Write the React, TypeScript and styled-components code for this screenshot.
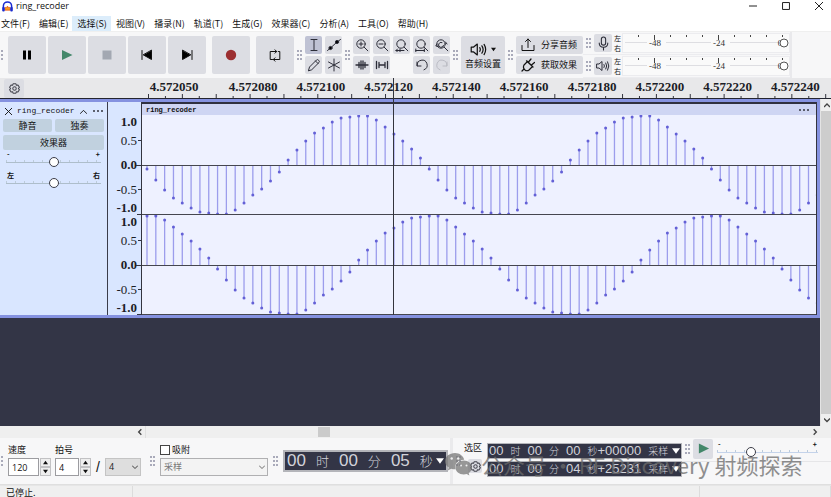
import React from 'react';
import styled, { createGlobalStyle, css } from 'styled-components';

const UI = '"Open Sans", "Noto Sans", "Noto Sans CJK SC", sans-serif';
const CJK = '"Noto Sans CJK SC", sans-serif';
const MONO = '"Liberation Mono", "Noto Sans CJK SC", monospace';
const NUM = '"Liberation Serif", serif';
const LCD = '"Liberation Sans", "Noto Sans CJK SC", sans-serif';

const GlobalStyle = createGlobalStyle`
  *, *::before, *::after { box-sizing: border-box; }
  body { margin: 0; background: #efefef; color: #111; font: 9px/12px ${UI}; }
  button, input, select { font: inherit; color: inherit; margin: 0; padding: 0; border: 0; border-radius: 0; }
  button { background: none; }
  svg { display: block; }
`;

/* ---------- shell ---------- */
const Window = styled.div`
  display: flex; flex-direction: column; height: 100vh; overflow: hidden; position: relative;
`;
const TitleBar = styled.header`
  display: flex; align-items: center; height: 16px; flex: none; padding: 0 8px 4px 2px; background: #fff; gap: 3px;
`;
const Title = styled.h1`
  margin: 0; flex: 1; font: 9px/12px ${UI};
`;
const WindowButtons = styled.div`
  display: flex; gap: 25px;
`;
const MenuBar = styled.nav`
  display: flex; flex: none; height: 15px; background: #fff; overflow: hidden;
`;
const MenuItem = styled.button<{ $on?: boolean }>`
  flex: none; padding: 0 4px 0 5px; font: 9px/15px ${CJK}; white-space: nowrap;
  background: ${p => (p.$on ? '#dcedfb' : 'transparent')};
  &:first-child { padding-left: 1px; }
`;

/* ---------- toolbar ---------- */
const ToolBar = styled.div`
  display: flex; flex: none; align-items: center; height: 47px; background: #f7f7f8; overflow: hidden;
  border-top: 1px solid #efefef;
`;
const GripBox = styled.span<{ $kind: 'edge' | 'wide' | 'plain' }>`
  flex: none; display: block; width: 5px;
  margin: ${p => ({ edge: '0 5px 0 -2px', wide: '0 5px', plain: '0 3px' })[p.$kind]};
`;
const Transport = styled.div`
  display: flex; flex: none; gap: 2px;
`;
const btn = css`
  display: flex; align-items: center; justify-content: center; background: #dcdde3; border-radius: 2px;
`;
const BigButton = styled.button<{ $apart?: boolean }>`
  ${btn} width: 38px; height: 38px; margin-left: ${p => (p.$apart ? '4px' : '0')};
`;
const ToolGrid = styled.div<{ $cols: number }>`
  display: grid; flex: none; gap: 2px 3px; grid-template-columns: repeat(${p => p.$cols}, 17px); grid-auto-rows: 18px;
`;
const ToolButton = styled.button<{ $on?: boolean; $col?: number; $dim?: boolean }>`
  ${btn} background: ${p => (p.$on ? '#bfc2d4' : '#dcdde3')};
  color: ${p => (p.$dim ? '#bbbcc4' : '#2c2d38')};
  ${p => p.$col && css`grid-column: ${p.$col};`}
`;
const AudioSetup = styled.button`
  ${btn} flex: none; flex-direction: column; width: 44px; height: 38px; font: 9px/12px ${CJK};
`;
const IconRow = styled.span`
  display: flex; align-items: center; gap: 4px;
`;
const ShareStack = styled.div`
  display: grid; flex: none; gap: 2px; width: 67px; grid-auto-rows: 18px;
`;
const ShareButton = styled.button`
  ${btn} justify-content: flex-start; padding-left: 5px; gap: 6px; font: 9px/12px ${CJK}; white-space: nowrap;
`;
const Meters = styled.div`
  display: flex; flex-direction: column; flex: 1; max-width: 209px; border-right: 2px solid #e9e9ec;
`;
const MeterRow = styled.div`
  display: flex; align-items: center; height: 23px; border-bottom: 1px solid #ececef;
`;
const MeterButton = styled.button`
  ${btn} flex: none; width: 18px; height: 18px; color: #2c2d38;
`;
const ChannelNames = styled.span`
  display: flex; flex: none; flex-direction: column; width: 10px; padding-left: 2px; font: 7px/10px ${CJK};
`;
const MeterScale = styled.div`
  flex: 1; height: 20px; border: 1px solid #ececef; background: #fafafa;
`;

/* ---------- workspace ---------- */
const Workspace = styled.main`
  display: flex; flex-direction: column; flex: 1; min-height: 0; position: relative; background: #333546;
`;
const Ruler = styled.div`
  display: flex; flex: none; height: 21px; background: #e8e8ea; border-bottom: 1px solid #24252f;
`;
const RulerCorner = styled.div`
  flex: none; width: 142px; padding: 1px 4px;
`;
const RulerButton = styled.button`
  ${btn} width: 20px; height: 19px; color: #44454f;
`;
const RulerScale = styled.div`
  flex: 1; min-width: 0; overflow: hidden;
`;
const Body = styled.div`
  display: flex; flex: 1; min-height: 0;
`;
const TrackArea = styled.div`
  flex: 1; min-width: 0;
`;
const Track = styled.section`
  display: flex; border: 3px solid #8592e0; border-left: 0; background: #d9e6ff;
`;
const Panel = styled.div`
  flex: none; width: 108px; padding: 3px 3px 0; border-right: 1px solid #3a3c4a;
`;
const PanelHead = styled.div`
  display: flex; align-items: center; height: 12px; margin-bottom: 2px; padding: 0 1px 0 2px; gap: 5px;
`;
const TrackName = styled.span`
  flex: 1; font: 8px/12px ${MONO};
`;
const PlainButton = styled.button`
  display: flex; flex: none;
`;
const PanelButtons = styled.div`
  display: grid; grid-template-columns: 1fr 1fr; gap: 3px;
`;
const PanelButton = styled.button<{ $wide?: boolean }>`
  background: #c1d1df; border-radius: 2px; font: 9px/13px ${CJK}; height: 13px;
  ${p => p.$wide && css`grid-column: 1 / -1; height: 15px; line-height: 14px;`}
`;
const SliderBlock = styled.label<{ $tight?: boolean }>`
  display: block; padding: 0 3px; margin-top: ${p => (p.$tight ? '5px' : '1px')};
`;
const SliderEnds = styled.span`
  display: flex; justify-content: space-between; padding: 0 1px; height: 5px; font: bold 7px/7px ${CJK};
`;
const Range = styled.input<{ $blue?: boolean }>`
  appearance: none; display: block; width: 100%; height: 11px; background:
    linear-gradient(${p => (p.$blue ? '#c4d3ea' : '#aebecb')}, ${p => (p.$blue ? '#c4d3ea' : '#aebecb')}) 0 6px / 100% 1px no-repeat,
    repeating-linear-gradient(90deg, #bccbda 0 1px, transparent 1px 9px) 0 4px / 100% 2px no-repeat;
  &::-webkit-slider-thumb {
    appearance: none; width: 10px; height: 10px; border-radius: 50%; border: 1px solid #3c3d48; background: #fff;
  }
`;
const Axis = styled.div`
  flex: none; width: 34px; padding-top: 13px; border-right: 1px solid #33343f;
`;
const Clip = styled.div`
  flex: 1; min-width: 0; border-right: 1px solid #33343f; background: #eef1ff;
`;
const ClipHead = styled.div`
  display: flex; align-items: center; justify-content: space-between; height: 13px; padding: 0 6px 0 4px;
  border-top: 2px solid #2f3040; background: #ced5f3; font: bold 7px/10px ${MONO};
`;
const Playhead = styled.div`
  position: absolute; left: 393px; top: 0; height: 237px; width: 1px; background: #33343c;
`;
const VScroll = styled.div`
  display: flex; flex: none; flex-direction: column; width: 11px; background: #efefef; border-left: 1px solid #e4e4e4;
`;
const VThumb = styled.div`
  flex: 1; background: #cdcdcd;
`;
const ScrollArrow = styled.button`
  display: flex; flex: none; align-items: center; justify-content: center; width: 11px; height: 12px; color: #444;
`;
const HScroll = styled.div`
  display: flex; flex: none; height: 12px; background: #efefef; padding: 0 11px 0 134px;
`;
const HTrack = styled.div`
  flex: 1; padding: 1px 0 1px 25%; border-left: 1px solid #e0e0e0;
`;
const HThumb = styled.div`
  width: 12px; height: 10px; background: #cbcbcb;
`;

/* ---------- bottom bar ---------- */
const BottomBar = styled.div`
  display: flex; flex: none; height: 47px; position: relative; background: #f7f7f8; border-bottom: 1px solid #dfdfdf;
`;
const Center = styled.div`
  display: flex; align-items: center; flex: none;
`;
const Field = styled.div<{ $gap?: number }>`
  display: flex; flex: none; flex-direction: column; padding-top: 6px; margin-right: ${p => p.$gap || 0}px;
`;
const FieldLabel = styled.label`
  display: flex; align-items: center; height: 12px; margin-bottom: 2px; gap: 2px; font: 9px/12px ${CJK};
`;
const FieldRow = styled.div`
  display: flex; align-items: center; height: 18px;
`;
const NumberInput = styled.input<{ $w: number }>`
  width: ${p => p.$w}px; height: 18px; padding: 0 3px; border: 1px solid #9c9ca0; background: #fff; font: 9px/16px ${UI};
`;
const Spinner = styled.span`
  display: grid; width: 11px; height: 18px; grid-auto-rows: 9px; margin-left: 1px;
`;
const SpinButton = styled.button`
  display: flex; align-items: center; justify-content: center; background: #eee; border: 1px solid #c2c2c4;
`;
const Slash = styled.span`
  width: 14px; text-align: center; font: 14px/18px ${LCD};
`;
const SelectBox = styled.span<{ $w: number }>`
  position: relative; display: block; width: ${p => p.$w}px; height: 18px;
  svg { position: absolute; right: 3px; top: 6px; pointer-events: none; }
`;
const Select = styled.select<{ $off?: boolean }>`
  appearance: none; width: 100%; height: 18px; padding: 0 3px; border: 1px solid ${p => (p.$off ? '#b0b0b2' : '#c4c4c4')};
  background: ${p => (p.$off ? '#f3f3f3' : '#dedede')}; color: ${p => (p.$off ? '#777' : '#222')};
  font: ${p => (p.$off ? `9px/16px ${CJK}` : `9px/16px ${UI}`)}; opacity: 1;
`;
const Check = styled.input`
  appearance: none; width: 10px; height: 10px; border: 1px solid #444; background: #fff;
`;
const TimeBox = styled.div<{ $big?: boolean }>`
  display: flex; align-items: center; justify-content: space-between; flex: none;
  background: #333546; color: #d2d3da; white-space: nowrap;
  ${p => p.$big
    ? css`height: 22px; width: 165px; padding: 0 2px; border: 2px solid #b4b5ba; font: 17px/18px ${LCD};`
    : css`height: 16px; width: 195px; padding: 0 1px; border: 1px solid #b4b5ba; font: 13px/14px ${LCD};`}
`;
const TimeFields = styled.span<{ $big?: boolean }>`
  display: flex; align-items: center; gap: ${p => (p.$big ? '10px' : '7px')};
`;
const TimeField = styled.span`
  display: flex; align-items: center;
`;
const Unit = styled.span<{ $big?: boolean }>`
  font: ${p => (p.$big ? '300 13px/18px' : '300 10px/14px')} ${CJK};
`;
const Caret = styled.button`
  display: flex; color: #fff;
`;
const Divider = styled.span`
  flex: none; width: 3px; margin-left: 2px; background: #eaeaec;
`;
const SelectionCol = styled.div`
  display: flex; flex: none; flex-direction: column; align-items: flex-end; width: 18px; gap: 4px; padding-top: 3px; font: 9px/14px ${CJK};
`;
const SmallGear = styled.button`
  ${btn} width: 14px; height: 14px; color: #44454f;
`;
const TimeStack = styled.div`
  display: flex; flex: none; flex-direction: column; gap: 2px; padding-top: 5px; margin-left: 5px;
`;
const SpeedBar = styled.div`
  display: flex; flex: 1; align-items: center; height: 24px; padding: 0 13px 2px 0; border-bottom: 1px solid #e6e6e8;
`;
const PlayButton = styled.button`
  ${btn} flex: none; width: 20px; height: 20px; margin-right: 1px;
`;
const SpeedSlider = styled.label`
  flex: 1; padding: 1px 0 0 3px; min-width: 0;
`;
const Watermark = styled.div`
  position: absolute; left: 445px; top: 10px; display: flex; align-items: center; gap: 9px; pointer-events: none;
  color: #6b6b6b; opacity: .75; font: 22px/32px ${CJK}; white-space: nowrap;
`;
const StatusBar = styled.footer`
  display: flex; flex: none; height: 12px; overflow: hidden; background: #efefef; border-top: 1px solid #e6e6e6; font: 9px/14px ${CJK};
`;
const StatusCell = styled.span<{ $grow: number }>`
  flex: ${p => p.$grow} 1 0; padding-left: 6px; border-right: 1px solid #dcdcdc;
`;

/* ---------- icons ---------- */
type IconProps = { size?: number; children: React.ReactNode; w?: number };
const Icon = ({ size = 14, children, w = 1 }: IconProps) => (
  <svg width={size} height={size} viewBox="0 0 14 14" fill="none" stroke="currentColor" strokeWidth={w} strokeLinecap="round" strokeLinejoin="round" aria-hidden="true">{children}</svg>
);
const Grip = ({ kind = 'plain' }: { kind?: 'edge' | 'wide' | 'plain' }) => (
  <GripBox $kind={kind}>
    <svg width="5" height="10" fill="#a9aaba">
      {[0, 4, 8].map(y => [0, 3].map(x => <rect key={`${x}-${y}`} x={x} y={y} width="2" height="2" />))}
    </svg>
  </GripBox>
);
const Lens = ({ children }: { children?: React.ReactNode }) => (
  <Icon><circle cx="6" cy="6" r="4.2" /><path d="M9.2 9.2 12.8 12.8" />{children}</Icon>
);
const Gear = ({ size = 11 }: { size?: number }) => (
  <Icon size={size} w={1.3}><path d="M5.2 1h3.6l.6 1.9 2-.4 1.8 3L11.9 7l1.3 1.5-1.8 3-2-.4L8.8 13H5.2l-.6-1.9-2 .4-1.8-3L2.1 7 .8 5.5l1.8-3 2 .4z" /><circle cx="7" cy="7" r="2.2" /></Icon>
);
const Speaker = ({ size = 16 }: { size?: number }) => (
  <Icon size={size}><path d="M1 5h2l3-2.5v9L3 9H1zM8 5.5q1 1.5 0 3M9.8 4q2 3 0 6M11.6 2.8q2.6 4.2 0 8.4" /></Icon>
);
const Chevron = ({ d, size = 6, w = 1 }: { d: string; size?: number; w?: number }) => (
  <svg width={size} height={size} viewBox="0 0 6 6" fill="none" stroke="currentColor" strokeWidth={w}><path d={d} /></svg>
);
const UP = 'M0 5 3 2 6 5', DOWN = 'M0 1.5 3 4.5 6 1.5', LEFT = 'M4 1 2 3 4 5', RIGHT = 'M2 1 4 3 2 5';
const Triangle = ({ up, size = 5 }: { up?: boolean; size?: number }) => (
  <svg width={size} height={size} viewBox="0 0 6 6" fill="currentColor"><path d={up ? 'M0 5 3 1 6 5z' : 'M0 1 3 5 6 1z'} /></svg>
);
const Ellipsis = () => (
  <svg width="12" height="4" fill="#33343f">{[1, 5, 9].map(x => <rect key={x} x={x} y="1" width="2" height="2" rx="1" />)}</svg>
);
const AppLogo = () => (
  <svg width="11" height="11" viewBox="0 0 12 12" aria-hidden="true">
    <path d="M3 10V7.5l1-1 1 1 1-2 1 2 1-1 1 1V10z" fill="#f7a01a" stroke="#e3501c" strokeWidth=".8" />
    <path d="M1.5 8V5.500a4.5 4.5 0 0 1 9 0V8" fill="none" stroke="#1a2bd0" strokeWidth="1.6" />
    <rect x=".2" y="6.5" width="2.8" height="5" rx="1.2" fill="#1a2bd0" /><rect x="9" y="6.5" width="2.8" height="5" rx="1.2" fill="#1a2bd0" />
  </svg>
);
const WeChat = () => (
  <svg width="27" height="27" viewBox="0 0 27 27" aria-hidden="true">
    <path fill="#777" d="M10 2C4.500 2 0 5.600 0 10.200c0 2.600 1.400 4.800 3.700 6.300l-.9 2.900 3.400-1.700c1.200.3 2.400.6 3.800.6h.6C9 12.500 13.500 8.500 19.200 8.700 18.300 4.900 14.500 2 10 2z" />
    <path fill="#777" d="M27 16.500c0-3.900-3.800-7-8.200-7-4.700 0-8.300 3.100-8.300 7s3.600 7 8.300 7c1 0 2-.2 2.900-.5l2.700 1.500-.7-2.500c2-1.300 3.300-3.300 3.300-5.500z" />
    <g fill="#eee"><circle cx="6.7" cy="7.5" r="1.2" /><circle cx="13.2" cy="7.5" r="1.2" /><circle cx="16" cy="14.5" r="1" /><circle cx="21.5" cy="14.5" r="1" /></g>
  </svg>
);

/* ---------- data ---------- */
const MENUS = ['文件(F)', '编辑(E)', '选择(S)', '视图(V)', '播录(N)', '轨道(T)', '生成(G)', '效果器(C)', '分析(A)', '工具(O)', '帮助(H)'];
const WAVE = [4, 15, 25, 33, 38, 43, 47, 48, 49, 49, 45, 38, 30, 24, 16, 7, -5, -15, -24, -32, -37, -43, -47, -48, -49, -49, -45, -38, -31, -24, -16, -7];
const TIMES = ['4.572080', '4.572100', '4.572120', '4.572140', '4.572160', '4.572180', '4.572200', '4.572220', '4.572240'];
const LONG_TICKS = [1, 5];

const Stems = ({ phase, name }: { phase: number; name: string }) => (
  <svg width="100%" height="100" role="img" aria-label={name}>
    {Array.from({ length: 77 }, (_, i) => {
      const x = 5 + i * 8.82;
      const v = WAVE[(i + phase) % 32];
      return <g key={i}><path d={`M${x} 50V${50 + v}`} stroke="#9c9dec" strokeWidth="1.3" /><circle cx={x} cy={50 + v} r="1.5" fill="#6360d6" /></g>;
    })}
    <path d="M0 50.5H2000M0 99.5H2000" stroke="#45464f" />
  </svg>
);
const AxisScale = () => (
  <svg width="33" height="100" fontFamily={NUM} fontSize="13" textAnchor="end" fill="#1c1d26">
    <g fontWeight="bold"><text x="29" y="11">1.0</text><text x="29" y="54">0.0</text><text x="29" y="97">-1.0</text></g>
    <text x="29" y="30">0.5</text><text x="29" y="79">-0.5</text>
    <path d="M30 25.5h3M28 50.5h5M30 74.5h3M29 99.5h4" stroke="#33343f" />
  </svg>
);
const MeterDrawing = () => (
  <svg width="100%" height="18" fontFamily={NUM} fontSize="9" textAnchor="middle" fill="#333">
    <path d="M2 8.500H24M43 8.500H88M107 8.500H156" stroke="#dedee2" />
    {Array.from({ length: 10 }, (_, i) => <path key={i} d={`M${15.5 + i * 16} 1v${LONG_TICKS.includes(i) ? 5 : 2}`} stroke="#444" />)}
    <text x="32" y="12">-48</text><text x="96" y="12">-24</text><text x="157" y="12">0</text>
    <circle cx="161" cy="9" r="4" fill="#fff" stroke="#555" />
  </svg>
);

type ClockProps = { label: string; h: string; m: string; s: string; samples?: string; big?: boolean };
const Clock = ({ label, h, m, s, samples, big }: ClockProps) => (
  <TimeBox $big={big} role="group" aria-label={label}>
    <TimeFields $big={big}>
      <span>{h}</span><Unit $big={big}>时</Unit>
      <span>{m}</span><Unit $big={big}>分</Unit>
      <span>{s}</span><TimeField><Unit $big={big}>秒</Unit>{samples && <span>+{samples}</span>}</TimeField>
      {samples && <Unit>采样</Unit>}
    </TimeFields>
    <Caret aria-label="格式"><Triangle size={8} /></Caret>
  </TimeBox>
);
const Spin = () => (
  <Spinner><SpinButton aria-label="增加"><Triangle up /></SpinButton><SpinButton aria-label="减少"><Triangle /></SpinButton></Spinner>
);

export default function App() {
  return (
    <Window>
      <GlobalStyle />
      <TitleBar>
        <AppLogo /><Title>ring_recoder</Title>
        <WindowButtons>
          <PlainButton aria-label="最小化"><Chevron size={8} d="M0 3H6" w={0.7} /></PlainButton>
          <PlainButton aria-label="最大化"><Chevron size={8} d="M.4.4H5.6V5.6H.4z" w={0.7} /></PlainButton>
          <PlainButton aria-label="关闭"><Chevron size={8} d="M0 0 6 6M6 0 0 6" w={0.7} /></PlainButton>
        </WindowButtons>
      </TitleBar>
      <MenuBar>{MENUS.map((m, i) => <MenuItem key={m} $on={i === 2}>{m}</MenuItem>)}</MenuBar>

      <ToolBar>
        <Grip kind="edge" />
        <Transport>
          <BigButton aria-label="暂停"><Icon><path d="M3 2.5h3v9H3zM8 2.5h3v9H8z" fill="#000" stroke="none" /></Icon></BigButton>
          <BigButton aria-label="播放"><Icon><path d="M2 2 12.5 7 2 12z" fill="#43876a" stroke="none" /></Icon></BigButton>
          <BigButton aria-label="停止"><Icon><path d="M2.500 2.500h9v9h-9z" fill="#a3a8b2" stroke="none" /></Icon></BigButton>
          <BigButton aria-label="跳至开头"><Icon><path d="M11.5 2.500v9L3.500 7z" fill="#000" /><path d="M2 2.500v9" /></Icon></BigButton>
          <BigButton aria-label="跳至末尾"><Icon><path d="M2.500 2.500v9L10.500 7z" fill="#000" /><path d="M12 2.500v9" /></Icon></BigButton>
          <BigButton $apart aria-label="录制"><Icon><circle cx="7" cy="7" r="5.2" fill="#9c2f31" stroke="none" /></Icon></BigButton>
          <BigButton $apart aria-label="循环"><Icon><path d="M4.500 11.500H2.200V3.500H8.500M9.500 11.500V11.500M5.500 11.500H11.800V3.500H10.500M7 1.800 8.700 3.500 7 5.200M7 9.800 5.300 11.500 7 13.200" /></Icon></BigButton>
        </Transport>
        <Grip />
        <ToolGrid $cols={2}>
          <ToolButton $on aria-label="选择工具"><Icon><path d="M4 1.5h6M7 1.5v11M4 12.5h6" /></Icon></ToolButton>
          <ToolButton aria-label="包络工具"><Icon><path d="M.5 12.5 3.500 10 10 4 13.5 1.5" /><circle cx="3.500" cy="10" r="1.600" fill="#000" /><circle cx="10" cy="4" r="1.600" fill="#000" /></Icon></ToolButton>
          <ToolButton aria-label="绘制工具"><Icon><path d="M1.500 12.500 2.500 9 9.500 2q1-1 2.200.3t.3 2.200L5 11.500zM8.500 3 11 5.500" /></Icon></ToolButton>
          <ToolButton aria-label="多功能工具"><Icon><path d="M7 1v12M1.500 4 12.500 10M12.500 4 1.500 10" /></Icon></ToolButton>
        </ToolGrid>
        <Grip />
        <ToolGrid $cols={5}>
          <ToolButton aria-label="放大"><Lens><path d="M4 6h4M6 4v4" /></Lens></ToolButton>
          <ToolButton aria-label="缩小"><Lens><path d="M4 6h4" /></Lens></ToolButton>
          <ToolButton aria-label="缩放至选区"><Lens><path d="M1 12.500h8M2.500 11 1 12.500 2.500 14M5 11v3" /></Lens></ToolButton>
          <ToolButton aria-label="缩放至项目"><Lens><path d="M.8 12.500h8.500M.8 11v3M9.300 11v3" /></Lens></ToolButton>
          <ToolButton aria-label="切换缩放"><Lens><path d="M7 4.500a2.500 2.500 0 1 0 1.500 3M2 6 .8 8l2.400.5M10.500 4 12 6" /></Lens></ToolButton>
          <ToolButton aria-label="修剪"><Icon w={1.3}><path d="M1 7h12M4 4.500v5M6 3v8M8 3v8M10 4.500v5" /></Icon></ToolButton>
          <ToolButton aria-label="静音选区"><Icon w={1.3}><path d="M1.500 3.500v7M4 4.500v5M4 7h6M10 4.500v5M12.500 3.500v7" /></Icon></ToolButton>
          <ToolButton $col={4} aria-label="撤销"><Icon><path d="M2 4v4h4M2.200 7.800A5 5 0 1 1 9 11.800" /></Icon></ToolButton>
          <ToolButton $dim aria-label="重做"><Icon><path d="M12 4v4H8M11.800 7.800A5 5 0 1 0 5 11.800" /></Icon></ToolButton>
        </ToolGrid>
        <Grip />
        <AudioSetup><IconRow><Speaker size={17} /><Triangle /></IconRow>音频设置</AudioSetup>
        <Grip />
        <ShareStack>
          <ShareButton><Icon><path d="M1 7.500v5h12v-5M7 9.500V1M4.500 3.500 7 1l2.500 2.500" /></Icon>分享音频</ShareButton>
          <ShareButton><Icon w={1.2}><path d="M1 13l2-2M4 12q-2.500-2-1-5l3.500-3.500 5 5L8 12q-2 1.500-4 0zM5.500 2.800 12 9M7.500 4l2.500-3M10.500 7l3-2.500" /></Icon>获取效果</ShareButton>
        </ShareStack>
        <Meters>
          <MeterRow>
            <Grip />
            <MeterButton aria-label="录制电平"><Icon size={15}><rect x="5" y="1" width="4" height="7.5" rx="2" /><path d="M3 6.500q0 4 4 4t4-4M7 10.500V13" /></Icon></MeterButton>
            <ChannelNames><span>左</span><span>右</span></ChannelNames>
            <MeterScale><MeterDrawing /></MeterScale>
          </MeterRow>
          <MeterRow>
            <Grip />
            <MeterButton aria-label="播放电平"><Speaker size={14} /></MeterButton>
            <ChannelNames><span>左</span><span>右</span></ChannelNames>
            <MeterScale><MeterDrawing /></MeterScale>
          </MeterRow>
        </Meters>
      </ToolBar>

      <Workspace>
        <Ruler>
          <RulerCorner><RulerButton aria-label="时间轴选项"><Gear /></RulerButton></RulerCorner>
          <RulerScale>
            <svg width="100%" height="20" fontFamily={NUM} fontWeight="bold" fontSize="13" textAnchor="middle" fill="#1c1d26">
              <text x="32" y="13">4.572050</text>
              {TIMES.map((t, i) => <text key={t} x={111 + i * 67.8} y="13">{t}</text>)}
              {Array.from({ length: 60 }, (_, i) => <path key={i} d={`M${6.5 + i * 16.93} 20V${i % 2 ? 18 : 16}`} stroke="#33343f" />)}
            </svg>
          </RulerScale>
        </Ruler>
        <Body>
          <TrackArea>
            <Track>
              <Panel>
                <PanelHead>
                  <PlainButton aria-label="关闭轨道"><Chevron size={7} d="M0 0 6 6M6 0 0 6" w={0.8} /></PlainButton>
                  <TrackName>ring_recoder</TrackName>
                  <PlainButton aria-label="折叠"><Chevron size={7} d={UP} w={0.8} /></PlainButton>
                  <PlainButton aria-label="轨道菜单"><Ellipsis /></PlainButton>
                </PanelHead>
                <PanelButtons>
                  <PanelButton>静音</PanelButton><PanelButton>独奏</PanelButton>
                  <PanelButton $wide>效果器</PanelButton>
                </PanelButtons>
                <SliderBlock>
                  <SliderEnds><span>-</span><span>+</span></SliderEnds>
                  <Range type="range" defaultValue={50} aria-label="增益" />
                </SliderBlock>
                <SliderBlock $tight>
                  <SliderEnds><span>左</span><span>右</span></SliderEnds>
                  <Range type="range" defaultValue={50} aria-label="声像" />
                </SliderBlock>
              </Panel>
              <Axis><AxisScale /><AxisScale /></Axis>
              <Clip>
                <ClipHead><span>ring_recoder</span><PlainButton aria-label="片段菜单"><Ellipsis /></PlainButton></ClipHead>
                <Stems phase={0} name="左声道" /><Stems phase={24} name="右声道" />
              </Clip>
            </Track>
          </TrackArea>
          <VScroll>
            <ScrollArrow aria-label="向上"><Chevron d={UP} w={1.3} /></ScrollArrow>
            <VThumb />
            <ScrollArrow aria-label="向下"><Chevron d={DOWN} w={1.3} /></ScrollArrow>
          </VScroll>
        </Body>
        <Playhead />
      </Workspace>
      <HScroll>
        <ScrollArrow aria-label="向左"><Chevron size={8} d={LEFT} /></ScrollArrow>
        <HTrack><HThumb /></HTrack>
        <ScrollArrow aria-label="向右"><Chevron size={8} d={RIGHT} /></ScrollArrow>
      </HScroll>

      <BottomBar>
        <Center><Grip kind="edge" /></Center>
        <Field $gap={4}>
          <FieldLabel htmlFor="tempo">速度</FieldLabel>
          <FieldRow><NumberInput id="tempo" $w={31} defaultValue="120" /><Spin /></FieldRow>
        </Field>
        <Field $gap={4}>
          <FieldLabel htmlFor="beats">拍号</FieldLabel>
          <FieldRow>
            <NumberInput id="beats" $w={24} defaultValue="4" /><Spin /><Slash>/</Slash>
            <SelectBox $w={36}><Select aria-label="拍号分母"><option>4</option></Select><Chevron d={DOWN} w={0.8} /></SelectBox>
          </FieldRow>
        </Field>
        <Center><Grip kind="wide" /></Center>
        <Field>
          <FieldLabel><Check type="checkbox" />吸附</FieldLabel>
          <FieldRow><SelectBox $w={108}><Select $off disabled aria-label="吸附单位"><option>采样</option></Select><Chevron d={DOWN} w={0.6} /></SelectBox></FieldRow>
        </Field>
        <Center><Grip kind="wide" /><Clock big label="时间" h="00" m="00" s="05" /></Center>
        <Divider />
        <Center><Grip /></Center>
        <SelectionCol><span>选区</span><SmallGear aria-label="选区选项"><Gear /></SmallGear></SelectionCol>
        <TimeStack>
          <Clock label="选区起点" h="00" m="00" s="00" samples="00000" />
          <Clock label="选区终点" h="00" m="00" s="04" samples="25231" />
        </TimeStack>
        <SpeedBar>
          <Grip />
          <PlayButton aria-label="以指定速度播放"><Icon size={13}><path d="M2 1.500 13 7 2 12.500z" fill="#43876a" stroke="none" /></Icon></PlayButton>
          <SpeedSlider>
            <SliderEnds><span>-</span><span>+</span></SliderEnds>
            <Range $blue type="range" defaultValue={32} aria-label="播放速度" />
          </SpeedSlider>
        </SpeedBar>
        <Watermark><WeChat /><span>公众号 · RF Discovery 射频探索</span></Watermark>
      </BottomBar>
      <StatusBar>
        <StatusCell $grow={129}>已停止.</StatusCell><StatusCell $grow={575} /><StatusCell $grow={127} />
      </StatusBar>
    </Window>
  );
}
